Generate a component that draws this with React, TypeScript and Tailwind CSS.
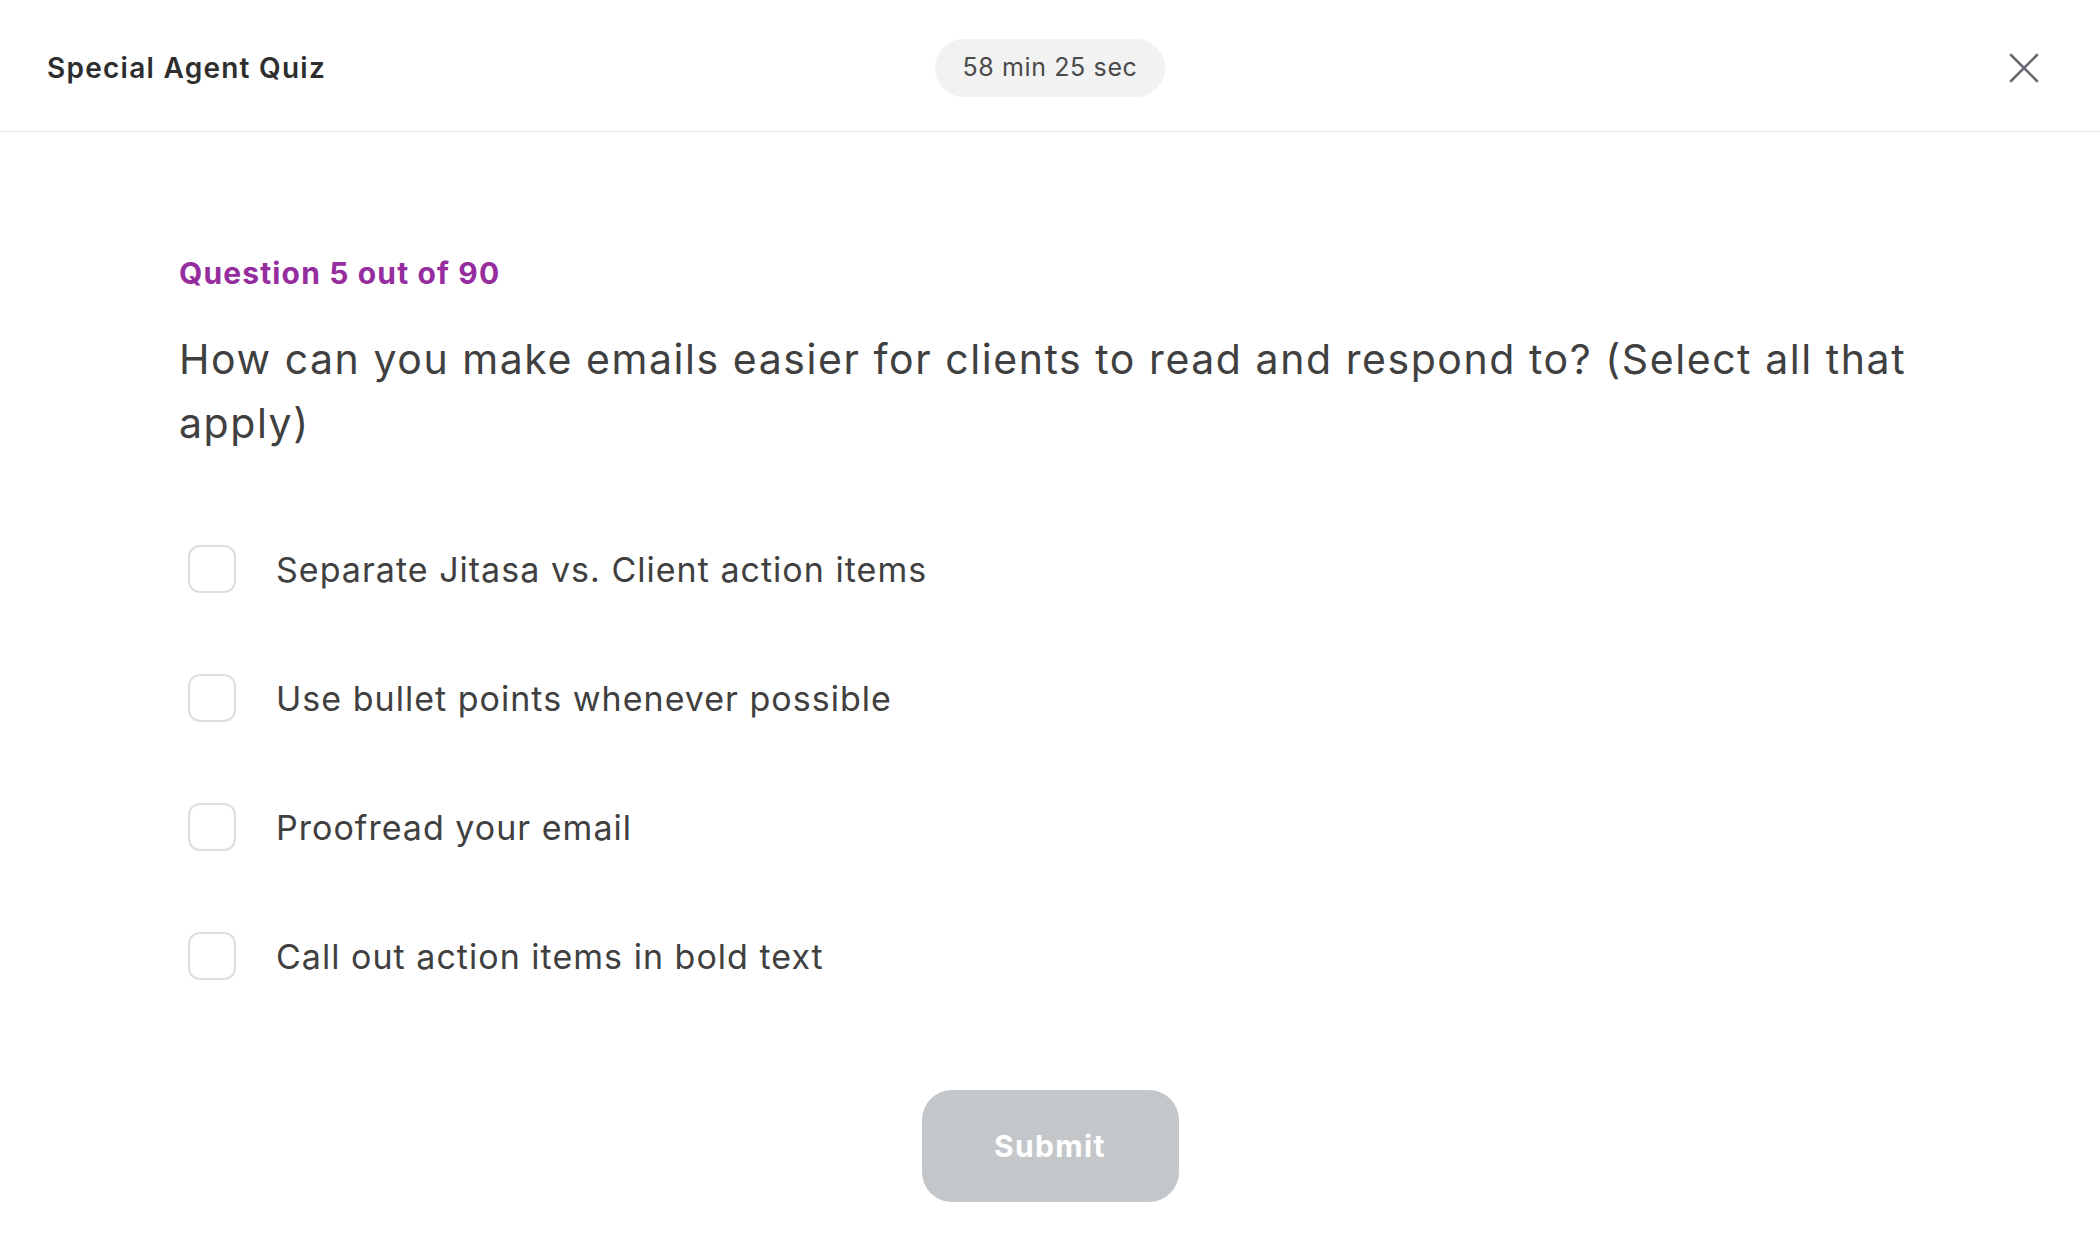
const options = [
  'Separate Jitasa vs. Client action items',
  'Use bullet points whenever possible',
  'Proofread your email',
  'Call out action items in bold text',
];

function CloseIcon() {
  return (
    <svg width="30" height="30" viewBox="0 0 30 30" fill="none" stroke="currentColor" strokeWidth="2.6" strokeLinecap="round">
      <path d="M2 2 28 28M28 2 2 28" />
    </svg>
  );
}

export default function App() {
  return (
    <div className="min-h-screen bg-white font-['Inter',sans-serif] text-[#3d3d3d] [font-optical-sizing:none]">
      <header className="grid h-[132px] grid-cols-3 items-center border-b border-[#e6e6e6] px-[47px] pt-[5px]">
        <h1 className="text-[28px] font-semibold tracking-[0.045em] text-[#2e2e2e]">Special Agent Quiz</h1>
        <div className="flex justify-center">
          <span className="flex h-[58px] w-[230px] items-center justify-center rounded-full bg-[#f2f2f2] text-[25px] tracking-[0.025em] text-[#4a4a4a]">
            58 min 25 sec
          </span>
        </div>
        <div className="flex justify-end">
          <button className="mr-[14px] text-[#656a72]">
            <CloseIcon />
          </button>
        </div>
      </header>

      <main className="px-[179px] pt-[124px]">
        <p className="text-[30px] font-bold leading-[34px] tracking-[0.038em] text-[#962d9e]">Question 5 out of 90</p>
        <h2 className="mt-[37px] text-[41px] leading-[64px] tracking-[0.038em] text-[#404040]">
          How can you make emails easier for clients to read and respond to? (Select all that apply)
        </h2>

        <ul className="mt-[90px] flex flex-col gap-[81px]">
          {options.map((o) => (
            <li key={o} className="flex h-[48px] items-center gap-[40px] pl-[9px]">
              <span className="h-[48px] w-[48px] shrink-0 rounded-[12px] border-2 border-[#dedede]" />
              <span className="text-[34px] tracking-[0.03em] text-[#404040]">{o}</span>
            </li>
          ))}
        </ul>

        <div className="mt-[110px] flex justify-center">
          <button className="h-[112px] w-[257px] rounded-[30px] bg-[#c4c7ca] text-[30px] font-bold tracking-[0.045em] text-white">
            Submit
          </button>
        </div>
      </main>
    </div>
  );
}
